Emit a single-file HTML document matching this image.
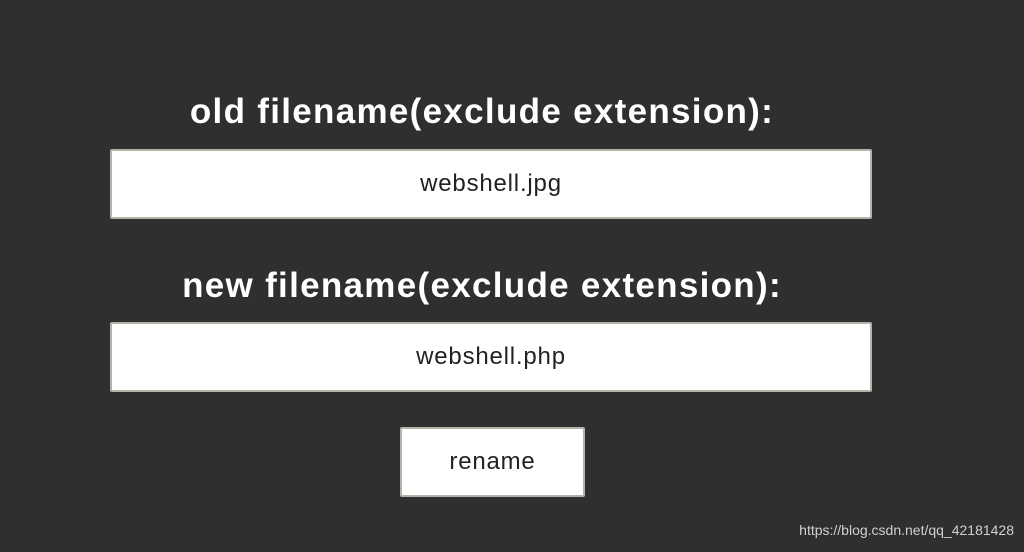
<!DOCTYPE html>
<html><head><style>
body{margin:0;width:1024px;height:552px;background:#2f2f2f;position:relative;overflow:hidden;font-family:"Liberation Sans",sans-serif}
.h{position:absolute;left:0;width:964px;text-align:center;color:#fff;font-weight:bold;font-size:35px;letter-spacing:1.3px;line-height:40px}
.box{position:absolute;background:#fff;border:2px solid #b3b3aa;border-radius:2px;box-sizing:border-box;text-align:center;color:#222;font-size:24px;letter-spacing:0.8px;display:flex;align-items:center;justify-content:center}
.wm{position:absolute;right:10px;top:522px;color:#d0d0d0;font-size:14px}
</style></head><body>
<div class="h" style="top:92px">old filename(exclude extension):</div>
<div class="box" style="left:110px;top:149px;width:762px;height:70px">webshell.jpg</div>
<div class="h" style="top:266px">new filename(exclude extension):</div>
<div class="box" style="left:110px;top:322px;width:762px;height:70px">webshell.php</div>
<div class="box" style="left:400px;top:427px;width:185px;height:70px">rename</div>
<div class="wm">https://blog.csdn.net/qq_42181428</div>
</body></html>
